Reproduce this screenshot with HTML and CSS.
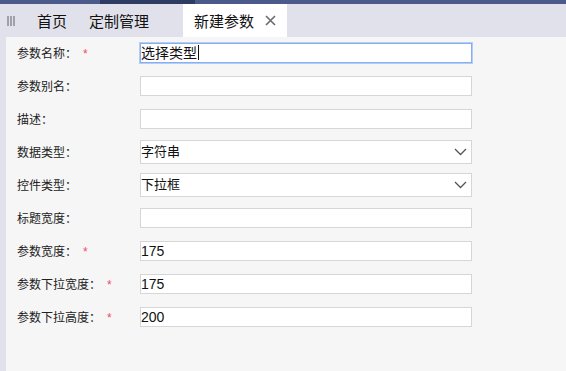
FILE: index.html
```html
<!DOCTYPE html>
<html lang="zh-CN">
<head>
    <meta charset="UTF-8">
    <meta name="viewport" content="width=device-width, initial-scale=1.0">
    <title>新建参数</title>
    <link rel="stylesheet" href="styles.css">
</head>
<body>

<div class="topbar">
    <div class="seg"></div>
    <div class="seg dark"></div>
    <div class="seg grow"></div>
</div>

<div class="tabs">
    <div class="menu-icon"><span></span><span></span><span></span></div>
    <div class="tab">首页</div>
    <div class="tab">定制管理</div>
    <div class="tab active">新建参数 <span class="close">
        <svg width="11" height="11" viewBox="0 0 11 11"><path d="M1 1L10 10M10 1L1 10" stroke="#6b6b6b" stroke-width="1.6" fill="none"/></svg>
    </span></div>
</div>

<div class="page">
    <div class="strip"></div>
    <div class="main">
        <div class="form">
            <label>参数名称：<i>*</i></label>
            <div class="field focus">选择类型<span class="caret"></span></div>

            <label>参数别名：</label>
            <div class="field"></div>

            <label>描述：</label>
            <div class="field"></div>

            <label>数据类型：</label>
            <div class="field select">字符串
                <svg width="13" height="8" viewBox="0 0 13 8"><path d="M1 1L6.5 6.5L12 1" stroke="#555" stroke-width="1.3" fill="none"/></svg>
            </div>

            <label>控件类型：</label>
            <div class="field select">下拉框
                <svg width="13" height="8" viewBox="0 0 13 8"><path d="M1 1L6.5 6.5L12 1" stroke="#555" stroke-width="1.3" fill="none"/></svg>
            </div>

            <label>标题宽度：</label>
            <div class="field"></div>

            <label>参数宽度：<i>*</i></label>
            <div class="field num">175</div>

            <label>参数下拉宽度：<i>*</i></label>
            <div class="field num">175</div>

            <label>参数下拉高度：<i>*</i></label>
            <div class="field num">200</div>
        </div>
    </div>
</div>

</body>
</html>
```

FILE: styles.css
```css
body {
    margin: 0;
    font-family: "Liberation Sans", "Noto Sans CJK SC", sans-serif;
    color: #222;
    height: 371px;
    display: flex;
    flex-direction: column;
    overflow: hidden;
}
.topbar {
    display: flex;
    height: 4px;
}
.seg {
    width: 100px;
    background: #4b5a8a;
}
.seg.dark {
    width: 95px;
    background: #2e3b62;
}
.seg.grow {
    flex: 1;
}
.tabs {
    display: flex;
    align-items: stretch;
    height: 33px;
    background: #e1e1eb;
    font-size: 15px;
}
.menu-icon {
    width: 26px;
    display: flex;
    align-items: center;
    padding-left: 7px;
    box-sizing: border-box;
    gap: 1px;
}
.menu-icon span {
    width: 2px;
    height: 10px;
    background: #a0a0a8;
}
.tab {
    display: flex;
    align-items: center;
    padding: 0 11px;
    color: #111;
}
.tab.active {
    margin-left: 23px;
    background: #fff;
}
.close {
    display: flex;
    margin-left: 11px;
}
.page {
    flex: 1;
    display: flex;
}
.strip {
    width: 6px;
    background: #e1e1eb;
}
.main {
    flex: 1;
    background: #f6f6f6;
    padding-left: 11px;
}
.form {
    display: grid;
    grid-template-columns: 123px 332px;
    grid-auto-rows: 33px;
    align-items: center;
    margin-top: -1px;
}
label {
    font-size: 12px;
    color: #222;
}
label i {
    font-style: normal;
    color: #f04a6a;
    margin-left: 6px;
}
.field {
    height: 20px;
    box-sizing: border-box;
    border: 1px solid #d6d6d6;
    background: #fff;
    font-size: 14px;
    line-height: 18px;
    display: flex;
    align-items: center;
    color: #111;
}
.field.focus {
    border-color: #86aef0;
    box-shadow: 0 0 0 1px #b4cdf6;
}
.caret {
    width: 1px;
    height: 15px;
    background: #111;
    margin-left: 1px;
}
.field.select {
    height: 24px;
    font-size: 13px;
    justify-content: space-between;
    padding-right: 4px;
}
.field.num {
    font-size: 14px;
}
```
